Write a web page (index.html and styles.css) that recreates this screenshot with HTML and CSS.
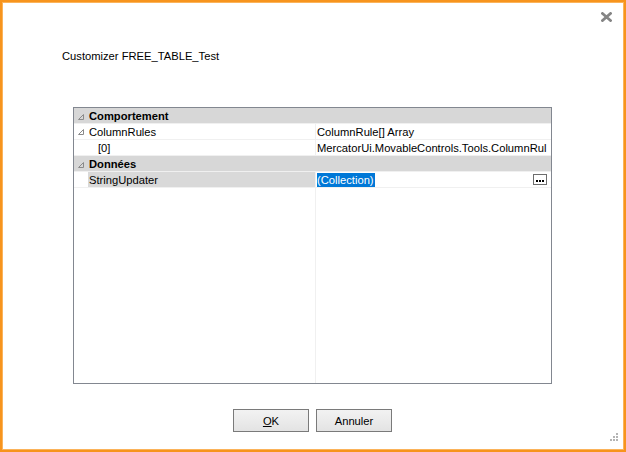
FILE: index.html
```html
<!DOCTYPE html>
<html>
<head>
<meta charset="utf-8">
<link rel="stylesheet" href="styles.css">
</head>
<body>
<div class="window">
  <div class="titlebar">
    <svg class="close" width="11" height="10" viewBox="0 0 11 10"><path d="M1.5 1.5 L9.5 8.5 M9.5 1.5 L1.5 8.5" stroke="#858585" stroke-width="2.8" stroke-linecap="square"/></svg>
  </div>
  <div class="caption">Customizer FREE_TABLE_Test</div>
  <div class="grid">
    <div class="cat"><span class="margin"><svg class="tri" width="6" height="6" viewBox="0 0 6 6"><path d="M0.5 5.5 H5.5 V0.5 Z" fill="none" stroke="#8a8a8a" stroke-width="1"/></svg></span><span class="label">Comportement</span></div>
    <div class="prop">
      <span class="margin"><svg class="tri" width="6" height="6" viewBox="0 0 6 6"><path d="M0.5 5.5 H5.5 V0.5 Z" fill="none" stroke="#8a8a8a" stroke-width="1"/></svg></span>
      <div class="name">ColumnRules</div>
      <div class="value">ColumnRule[] Array</div>
    </div>
    <div class="prop">
      <span class="margin"></span>
      <div class="name indent">[0]</div>
      <div class="value">MercatorUi.MovableControls.Tools.ColumnRul</div>
    </div>
    <div class="cat"><span class="margin"><svg class="tri" width="6" height="6" viewBox="0 0 6 6"><path d="M0.5 5.5 H5.5 V0.5 Z" fill="none" stroke="#8a8a8a" stroke-width="1"/></svg></span><span class="label">Données</span></div>
    <div class="prop selected">
      <span class="margin"></span>
      <div class="name">StringUpdater</div>
      <div class="value"><span class="hl">(Collection)</span><span class="dots"><svg width="8" height="2" viewBox="0 0 8 2"><rect x="0" y="0" width="2" height="2" fill="#000"/><rect x="3" y="0" width="2" height="2" fill="#000"/><rect x="6" y="0" width="2" height="2" fill="#000"/></svg></span></div>
    </div>
    <div class="filler">
      <span class="margin"></span>
      <div class="name"></div>
      <div class="value"></div>
    </div>
  </div>
  <div class="buttons">
    <button class="btn"><u>O</u>K</button>
    <button class="btn">Annuler</button>
  </div>
  <div class="grip">
    <i style="grid-column:3;grid-row:1"></i>
    <i style="grid-column:2;grid-row:2"></i>
    <i style="grid-column:3;grid-row:2"></i>
    <i style="grid-column:1;grid-row:3"></i>
    <i style="grid-column:2;grid-row:3"></i>
    <i style="grid-column:3;grid-row:3"></i>
  </div>
</div>
</body>
</html>
```

FILE: styles.css
```css
html, body {
  margin: 0;
  padding: 0;
  background: #ffffff;
}
body {
  font-family: "Liberation Sans", Arial, sans-serif;
  font-size: 11.2px;
  color: #000;
}
.window {
  position: relative;
  box-sizing: border-box;
  width: 626px;
  height: 452px;
  border: 2px solid #f7941d;
  box-shadow: inset 0 0 0 1px #fbb35a;
  background: #fff;
  display: flex;
  flex-direction: column;
}
.titlebar {
  height: 29px;
  display: flex;
  align-items: center;
  justify-content: flex-end;
  padding-right: 12px;
  padding-top: 1px;
  box-sizing: border-box;
}
.close { display: block; }
.caption {
  margin-top: 18px;
  margin-left: 60px;
  line-height: 15px;
  height: 15px;
}
.grid {
  margin-top: 43px;
  margin-left: 71px;
  width: 479px;
  height: 277px;
  box-sizing: border-box;
  border: 1px solid #828790;
  display: flex;
  flex-direction: column;
  overflow: hidden;
}
.cat, .prop, .filler {
  display: grid;
  grid-template-columns: 14px 227px 1fr;
}
.cat {
  height: 16px;
  background: #d7d7d7;
  box-sizing: border-box;
  border-bottom: 1px solid #f0f0f0;
  font-weight: bold;
  line-height: 17px;
}
.cat .label { grid-column: 2 / 4; padding-left: 1px; }
.margin {
  display: flex;
  align-items: center;
  justify-content: flex-end;
  padding-right: 4px;
  padding-top: 1px;
}
.tri { display: block; }
.prop {
  height: 16px;
  box-sizing: border-box;
  border-bottom: 1px solid #f0f0f0;
  line-height: 17px;
}
.name {
  padding-left: 1px;
  white-space: nowrap;
  overflow: hidden;
}
.name.indent { padding-left: 10px; }
.value {
  border-left: 1px solid #f0f0f0;
  padding-left: 1px;
  white-space: nowrap;
  overflow: hidden;
  position: relative;
}
.prop.selected .name { background: #d9d9d9; }
.hl {
  background: #0078d7;
  color: #fff;
  display: inline-block;
  line-height: 14px;
  margin-top: 1px;
  vertical-align: top;
  padding-right: 1px;
}
.dots {
  position: absolute;
  right: 4px;
  top: 2px;
  width: 14px;
  height: 11px;
  box-sizing: border-box;
  border: 1px solid #6d6d6d;
  background: #fff;
  display: flex;
  align-items: center;
  justify-content: center;
  padding-top: 2px;
}
.dots svg { display: block; }
.filler { flex: 1; }
.filler .value { border-left: 1px solid #f0f0f0; }
.buttons {
  margin-top: 25px;
  margin-left: 231px;
  display: flex;
  gap: 7px;
}
.btn {
  width: 76px;
  height: 23px;
  box-sizing: border-box;
  border: 1px solid #7a7a7a;
  background: linear-gradient(#f2f2f2, #ebebeb 50%, #e3e3e3);
  font-family: "Liberation Sans", Arial, sans-serif;
  font-size: 11.2px;
  color: #000;
  padding: 0;
}
.grip {
  position: absolute;
  right: 6px;
  bottom: 9px;
  display: grid;
  grid-template-columns: repeat(3, 2px);
  grid-template-rows: repeat(3, 2px);
  gap: 1px;
}
.grip i {
  display: block;
  width: 2px;
  height: 2px;
  background: #b4b4b4;
}
```
